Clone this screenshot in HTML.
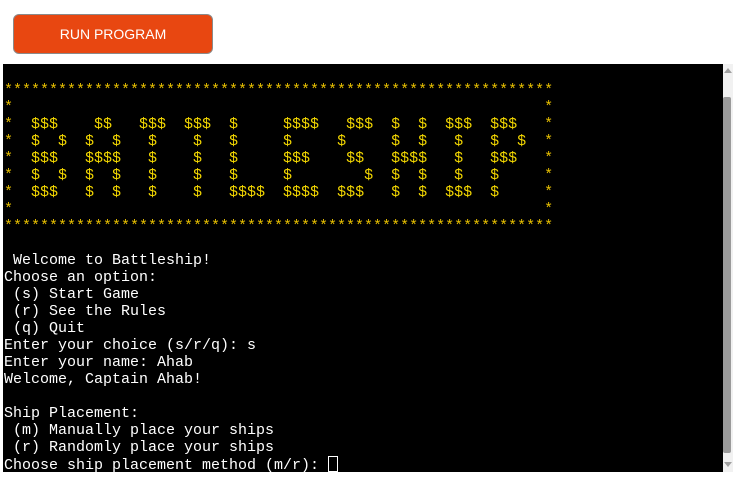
<!DOCTYPE html>
<html><head><meta charset="utf-8"><style>
body{margin:0;width:750px;height:500px;background:#fff;position:relative;overflow:hidden}
.btn{position:absolute;left:13px;top:14px;width:198px;height:38px;background:#e84711;border:1px solid #8a8a8a;border-radius:6px;color:#fff;font:14px "Liberation Sans",sans-serif;text-align:center;line-height:38px}
.term{position:absolute;left:3px;top:64px;width:720px;height:408px;background:#000;overflow:hidden}
pre{margin:0;position:absolute;left:1px;top:1px;font:15px/17px "Liberation Mono",monospace;color:#fff;white-space:pre}
.y{color:#f2d600}.s{color:#e8c000}
.cur{display:inline-block;width:8px;height:14px;border:1px solid #fff;vertical-align:-3px}
.sb{position:absolute;left:723px;top:64px;width:10px;height:408px;background:#f1f1f1}
.th{position:absolute;left:0;top:33px;width:8px;height:356px;background:#9a9a9a;border-radius:2px}
.au{position:absolute;left:1px;top:4px;width:0;height:0;border-left:4px solid transparent;border-right:4px solid transparent;border-bottom:5px solid #a0a0a0}
.ad{position:absolute;left:1px;top:398px;width:0;height:0;border-left:4px solid transparent;border-right:4px solid transparent;border-top:5px solid #a0a0a0}
</style></head><body>
<div class="btn">RUN PROGRAM</div>
<div class="term"><pre>

<span class="s">*************************************************************
*                                                           *
*  <span class="y">$$$    $$   $$$  $$$  $     $$$$   $$$  $  $  $$$  $$$</span>   *
*  <span class="y">$  $  $  $   $    $   $     $     $     $  $   $   $  $</span>  *
*  <span class="y">$$$   $$$$   $    $   $     $$$    $$   $$$$   $   $$$</span>   *
*  <span class="y">$  $  $  $   $    $   $     $        $  $  $   $   $</span>     *
*  <span class="y">$$$   $  $   $    $   $$$$  $$$$  $$$   $  $  $$$  $</span>     *
*                                                           *
*************************************************************</span>

 Welcome to Battleship!
Choose an option:
 (s) Start Game
 (r) See the Rules
 (q) Quit
Enter your choice (s/r/q): s
Enter your name: Ahab
Welcome, Captain Ahab!

Ship Placement:
 (m) Manually place your ships
 (r) Randomly place your ships
Choose ship placement method (m/r): <span class="cur"></span></pre></div>
<div class="sb"><div class="au"></div><div class="th"></div><div class="ad"></div></div>
</body></html>
